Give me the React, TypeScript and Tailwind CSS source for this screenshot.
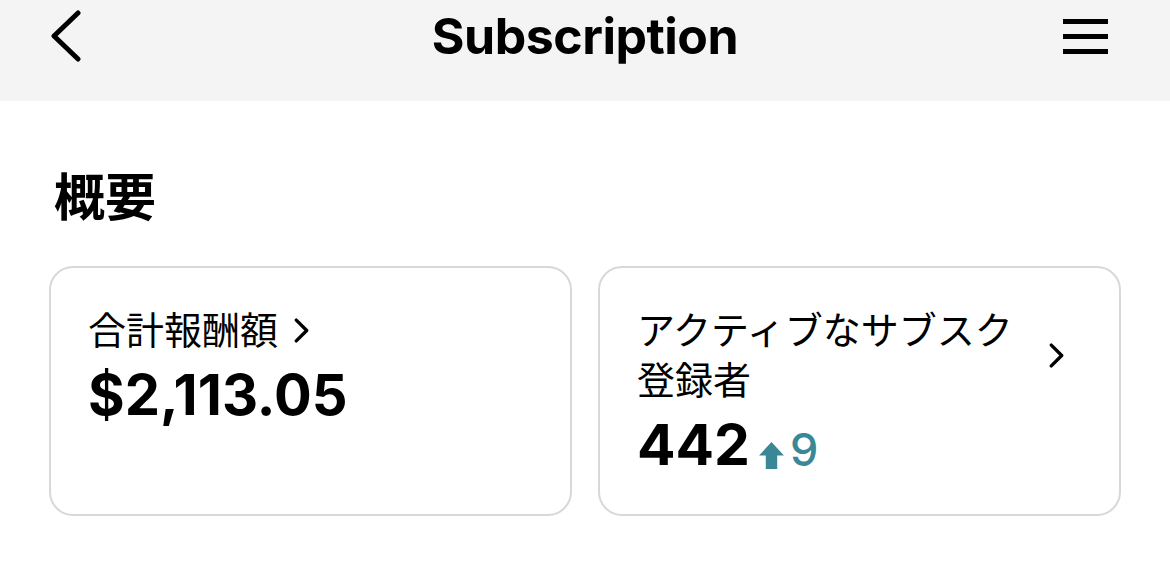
import { ReactNode } from 'react'

const font = { fontFamily: '"Inter", "Noto Sans CJK JP", sans-serif' }

const Chevron = ({ className }: { className?: string }) => (
  <svg viewBox="0 0 16 24" className={className} fill="none" stroke="currentColor" strokeWidth="3.2" strokeLinecap="round" strokeLinejoin="round">
    <path d="M3 2l10 10-10 10" />
  </svg>
)

const Card = ({ children }: { children: ReactNode }) => (
  <div className="flex-1 h-[250px] border-2 border-[#d8d8d8] rounded-[24px] pl-[37px] pt-[37px]">
    {children}
  </div>
)

const App = () => {
  return (
    <div className="w-[1170px] h-[571px] bg-white text-black overflow-hidden" style={font}>
      <div className="bg-[#f4f4f4] h-[101px] px-[50px]">
        <div className="grid grid-cols-[1fr_auto_1fr] items-center h-[72px]">
          <svg viewBox="0 0 32 52" className="w-[32px] h-[52px] justify-self-start" fill="none" stroke="currentColor" strokeWidth="5" strokeLinecap="round" strokeLinejoin="round">
            <path d="M28 3L4 26l24 23" />
          </svg>
          <h1 className="text-[50px] font-bold tracking-[-0.5px] leading-none">Subscription</h1>
          <div className="justify-self-end flex flex-col gap-[10px] w-[45px] mr-[12px]">
            <span className="h-[5px] bg-black block" />
            <span className="h-[5px] bg-black block" />
            <span className="h-[5px] bg-black block" />
          </div>
        </div>
      </div>

      <div className="px-[49px]">
        <h2 className="mt-[71px] ml-[5px] text-[51px] font-bold leading-none">概要</h2>
        <div className="mt-[43px] flex gap-[26px]">
          <Card>
            <div className="flex items-center gap-[15px] text-[38px] leading-[50px]">
              <span>合計報酬額</span>
              <Chevron className="w-[17px] h-[25px]" />
            </div>
            <div className="mt-[12px] text-[56px] font-bold leading-none tracking-[0px]">$2,113.05</div>
          </Card>
          <Card>
            <div className="flex items-center">
              <div className="w-[395px] text-[38px] leading-[50px]">アクティブなサブスク登録者</div>
              <Chevron className="ml-[16px] w-[17px] h-[25px]" />
            </div>
            <div className="mt-[11px] flex items-end">
              <span className="text-[57px] font-bold leading-none">442</span>
              <svg viewBox="0 0 24 26" className="ml-[9px] mb-[4px] w-[25px] h-[27px] text-[#3a8897]" fill="currentColor">
                <path d="M12 0L24 13h-6.5v13h-11V13H0z" />
              </svg>
              <span className="ml-[6px] text-[45px] font-medium leading-none text-[#3a8897] mb-[1px]">9</span>
            </div>
          </Card>
        </div>
      </div>
    </div>
  )
}

export default App
